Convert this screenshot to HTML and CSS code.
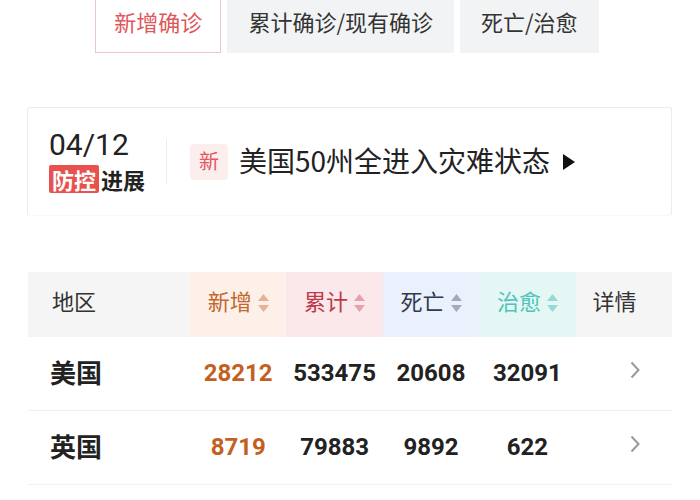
FILE: index.html
```html
<!DOCTYPE html>
<html lang="zh-CN">
<head>
<meta charset="utf-8">
<title>疫情</title>
<link rel="stylesheet" href="styles.css">
</head>
<body>
<div class="page">
  <div class="tabs">
    <div class="tab active">新增确诊</div>
    <div class="tab">累计确诊/现有确诊</div>
    <div class="tab">死亡/治愈</div>
  </div>

  <div class="news-card">
    <div class="date-block">
      <div class="date">04/12</div>
      <div class="label"><span class="label-red">防控</span><span class="label-dark">进展</span></div>
    </div>
    <div class="divider"></div>
    <div class="badge">新</div>
    <div class="headline">美国50州全进入灾难状态</div>
    <svg class="play" width="12" height="16" viewBox="0 0 12 16"><polygon points="0,0 12,8 0,16" fill="#111"/></svg>
  </div>

  <div class="table">
    <div class="th th-area">地区</div>
    <div class="th th-new">新增<svg class="sort" width="11" height="18" viewBox="0 0 11 18"><polygon points="5.5,0 11,7 0,7"/><polygon points="0,11 11,11 5.5,18"/></svg></div>
    <div class="th th-total">累计<svg class="sort" width="11" height="18" viewBox="0 0 11 18"><polygon points="5.5,0 11,7 0,7"/><polygon points="0,11 11,11 5.5,18"/></svg></div>
    <div class="th th-dead">死亡<svg class="sort" width="11" height="18" viewBox="0 0 11 18"><polygon points="5.5,0 11,7 0,7"/><polygon points="0,11 11,11 5.5,18"/></svg></div>
    <div class="th th-cure">治愈<svg class="sort" width="11" height="18" viewBox="0 0 11 18"><polygon points="5.5,0 11,7 0,7"/><polygon points="0,11 11,11 5.5,18"/></svg></div>
    <div class="th th-detail">详情</div>

    <div class="td name">美国</div>
    <div class="td num new">28212</div>
    <div class="td num">533475</div>
    <div class="td num">20608</div>
    <div class="td num">32091</div>
    <div class="td more"><svg width="10" height="18" viewBox="0 0 10 18"><polyline points="1.5,1.5 8.5,9 1.5,16.5" fill="none" stroke="#9a9a9a" stroke-width="2"/></svg></div>

    <div class="td name">英国</div>
    <div class="td num new">8719</div>
    <div class="td num">79883</div>
    <div class="td num">9892</div>
    <div class="td num">622</div>
    <div class="td more"><svg width="10" height="18" viewBox="0 0 10 18"><polyline points="1.5,1.5 8.5,9 1.5,16.5" fill="none" stroke="#9a9a9a" stroke-width="2"/></svg></div>
  </div>
</div>
</body>
</html>
```

FILE: styles.css
```css
* { box-sizing: border-box; }
html, body { margin: 0; padding: 0; background: #fff; }
body {
  font-family: "Noto Sans CJK SC", "Noto Sans", sans-serif;
  color: #222;
}
.page { width: 700px; height: 500px; overflow: hidden; }

.tabs {
  display: flex;
  justify-content: center;
  gap: 6px;
  margin-top: -8px;
  padding-right: 6px;
}
.tab {
  height: 61px;
  padding: 0 20px 4px;
  display: flex;
  align-items: center;
  font-size: 22px;
  color: #333;
  background: #f2f3f5;
  border: 1px solid #f2f3f5;
}
.tab.active {
  padding: 0 18px 4px;
  background: #fff;
  color: #e0575b;
  border-color: #efc5c6;
}

.news-card {
  margin: 54px 28px 0 27px;
  height: 109px;
  border: 1px solid #ececec;
  border-bottom-color: #f8f8f8;
  border-radius: 3px;
  display: flex;
  align-items: center;
  padding-left: 21px;
}
.date-block { display: flex; flex-direction: column; }
.date {
  font-family: Roboto, "Noto Sans", sans-serif;
  font-size: 30px;
  line-height: 30px;
  color: #222;
}
.label {
  display: flex;
  margin-top: 5px;
  font-size: 22px;
  font-weight: bold;
  line-height: 28px;
}
.label-red {
  background: #e8514e;
  color: #fff;
  padding: 0 3px;
  border-radius: 2px;
}
.label-dark { color: #222; padding-left: 2px; }
.divider {
  width: 1px;
  height: 45px;
  background: #ececec;
  margin: 0 23px 0 21px;
}
.badge {
  width: 38px;
  height: 36px;
  border-radius: 4px;
  background: #fdeeee;
  color: #e0585b;
  font-size: 20px;
  padding-bottom: 2px;
  display: flex;
  align-items: center;
  justify-content: center;
}
.headline {
  margin-left: 11px;
  font-size: 28px;
  color: #222;
  padding-bottom: 3px;
}
.play { margin-left: 13px; }

.table {
  margin: 56px 28px 0 28px;
  display: grid;
  grid-template-columns: 162px repeat(5, 1fr);
}
.th {
  height: 65px;
  display: flex;
  align-items: center;
  justify-content: center;
  font-size: 22px;
  gap: 6px;
  padding-bottom: 9px;
}
.th .sort { margin-top: 6px; }
.th-area { justify-content: flex-start; padding-left: 24px; background: #f5f5f5; color: #333; }
.th-new { background: #fdf0e8; color: #c2682c; }
.th-new .sort { fill: #e5b393; }
.th-total { background: #fae8ea; color: #bd3a4b; }
.th-total .sort { fill: #e4a2ab; }
.th-dead { background: #eaf1fc; color: #2f3a4e; }
.th-dead .sort { fill: #a3abb8; }
.th-cure { background: #e5f7f5; color: #4ec4bb; }
.th-cure .sort { fill: #93dbd4; }
.th-detail { justify-content: flex-start; padding-left: 17px; background: #f5f5f5; color: #333; }

.td {
  height: 74px;
  display: flex;
  align-items: center;
  justify-content: center;
  border-bottom: 1px solid #f0f0f0;
}
.name {
  justify-content: flex-start;
  padding-left: 22px;
  padding-bottom: 5px;
  font-size: 26px;
  font-weight: bold;
  color: #222;
}
.num {
  font-family: Roboto, "Noto Sans", sans-serif;
  font-size: 24px;
  font-weight: bold;
  color: #222;
  padding-bottom: 2px;
}
.num.new { color: #c45f1f; }
.more { justify-content: flex-end; padding-right: 32px; padding-bottom: 8px; }
```
